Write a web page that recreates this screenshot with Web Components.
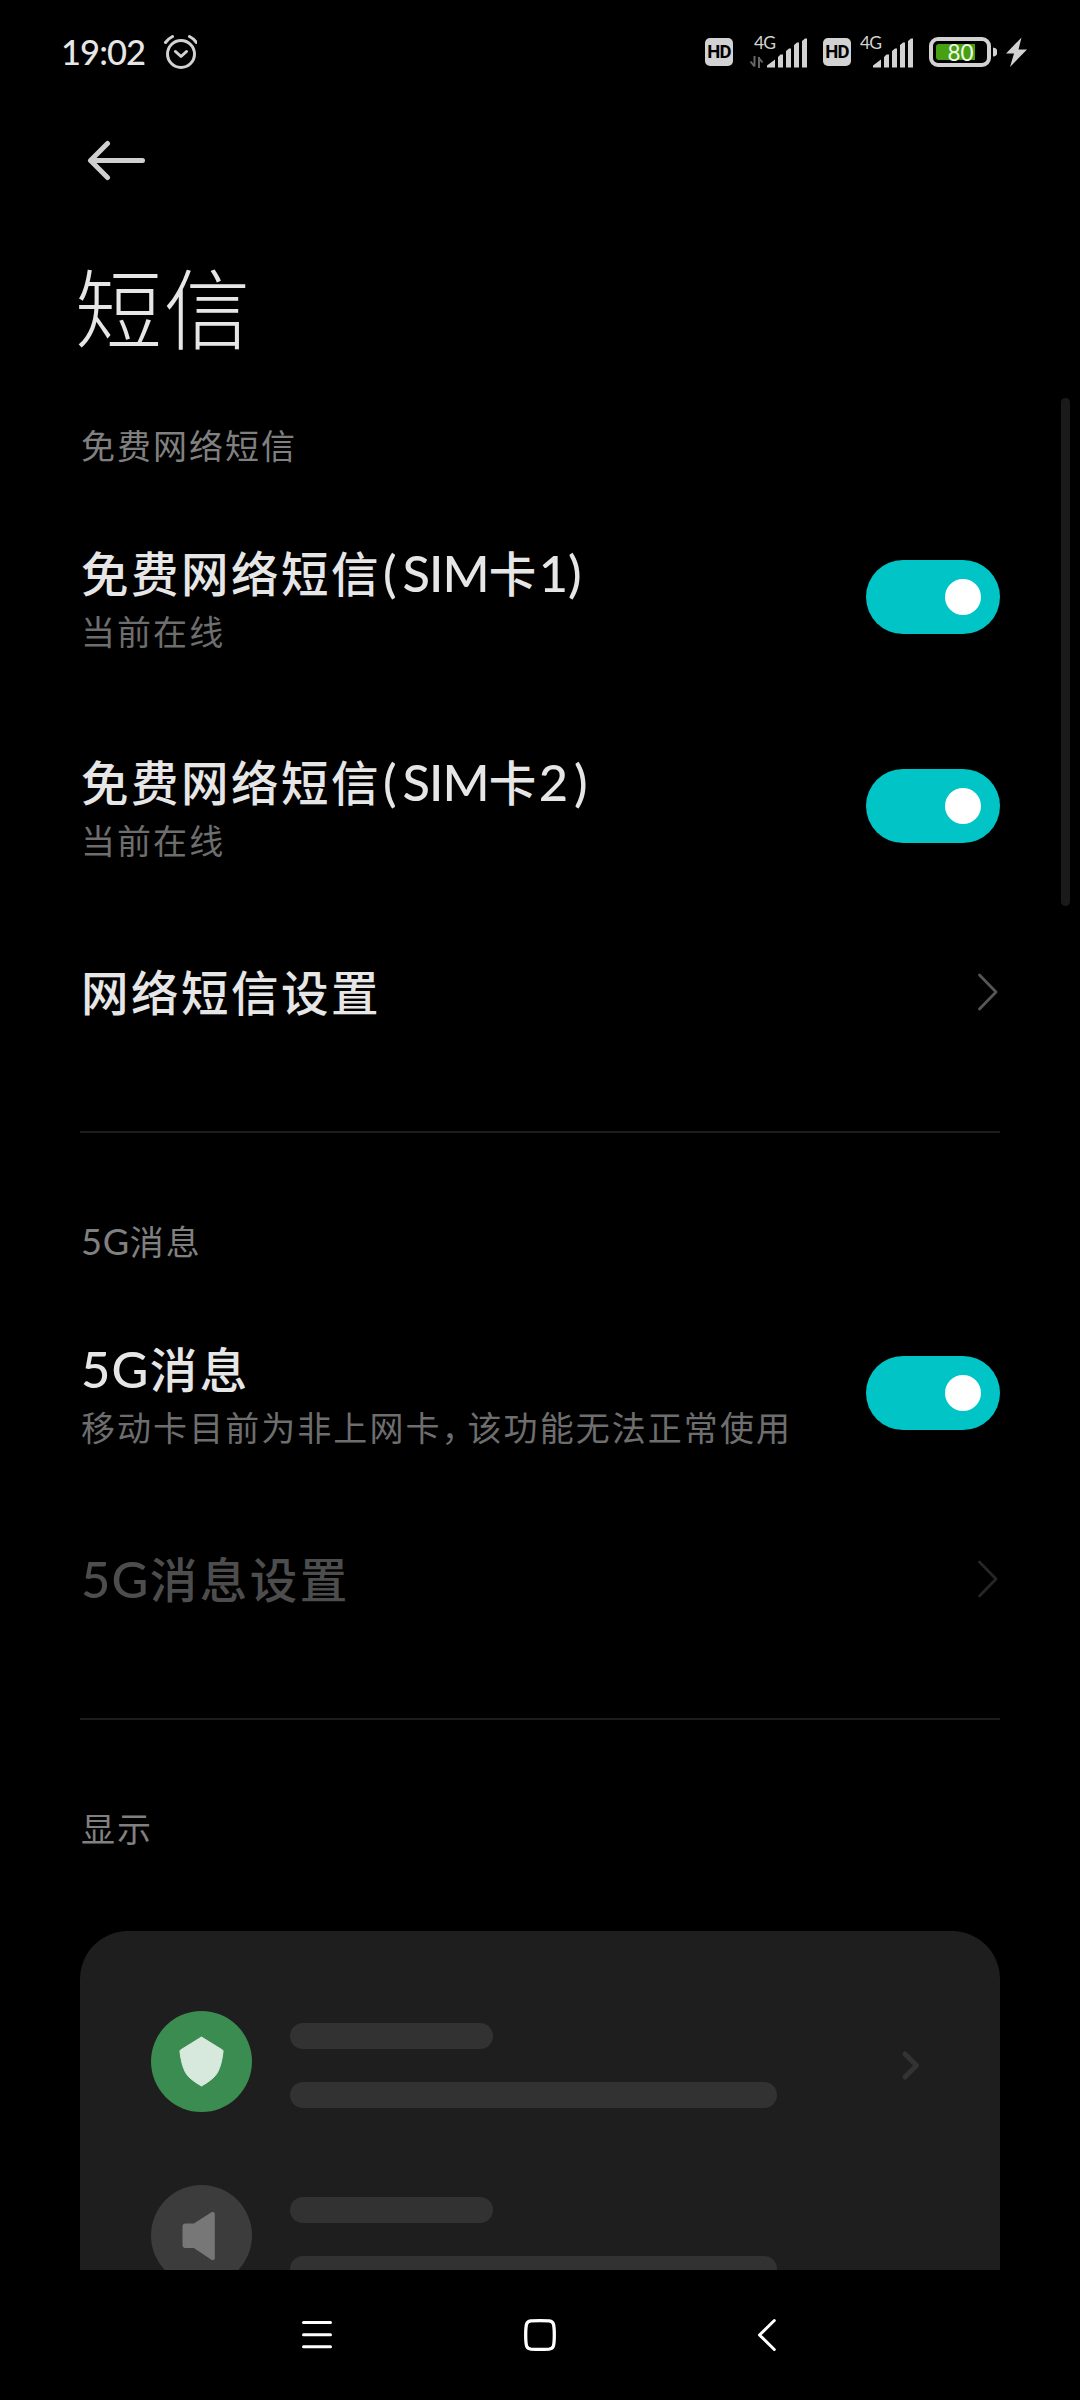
<!DOCTYPE html>
<html lang="zh-CN">
<head>
<meta charset="utf-8">
<title>短信</title>
<style>
html,body{margin:0;background:#000}
body{width:1080px;height:2400px;overflow:hidden;font-family:"Noto Sans CJK SC","Noto Sans",sans-serif;color:#e6e6e6}
</style>
</head>
<body>
<sms-settings></sms-settings>
<script>
function define(name, html){
  customElements.define(name, class extends HTMLElement{
    constructor(){
      super();
      this.attachShadow({mode:'open'}).innerHTML = html;
    }
  });
}

/* Latin run inside a Chinese label */
define('latin-run', `<style>:host{font-family:Lato,sans-serif;font-size:1.065em;line-height:0;letter-spacing:0}</style><slot></slot>`);

define('hd-badge', `<style>
:host{display:flex;width:28px;height:28px;border-radius:5px;background:#d2d2d2;align-items:center;justify-content:center;
font:700 18.500px/30px Roboto,sans-serif;letter-spacing:-.7px;color:#000}</style><span>HD</span>`);

define('signal-meter', `<style>
:host{display:block;width:57px;height:32px}
svg{display:block;overflow:visible}
text{font:400 17.5px Lato,sans-serif;fill:#d2d2d2}
:host(:not([data])) .d{display:none}</style>
<svg width="57" height="32" viewBox="0 0 57 32">
<text x="4" y="12.500" textLength="22">4G</text>
<g class="d" fill="none" stroke="#666" stroke-width="2"><path d="M4.5 20v10.5M4.5 30.500l-4-5"/><path d="M9 32V21M8.500 21.500l4 5"/></g>
<g fill="#d2d2d2"><path d="M17 31.500v-2l8-6v8zM28 31.500V21l2.500-2.500h2.500v13zM36 31.500V15l3-2.500h2v19zM44 31.500V9l3-2.500h2v25zM52 31.500V5l3-2.500h2v29z"/></g></svg>`);

define('battery-meter', `<style>
:host{display:block}svg{display:block}
text{font:400 23.500px Lato,sans-serif;fill:#f2fbea}</style>
<svg width="99" height="32" viewBox="0 0 99 32">
<rect x="2" y="3" width="58" height="26" rx="7" fill="none" stroke="#d2d2d2" stroke-width="4"/>
<path d="M10 8H46V24H10Q7 24 7 21V11Q7 8 10 8z" fill="#47a011"/>
<path d="M64 11.500q4 .5 4 3v3q0 2.500-4 3z" fill="#d2d2d2"/>
<text x="18.500" y="24.500" textLength="26" lengthAdjust="spacingAndGlyphs">80</text>
<path d="M92.500 1.500 77 17.500h8L81 31 98 13.500h-8.500z" fill="#d2d2d2"/></svg>`);

define('status-bar', `<style>
:host{display:flex;height:104px;box-sizing:border-box;padding:0 52px 0 61px;align-items:center}
.time{font:500 34.500px/40px Lato,sans-serif;letter-spacing:-.9px;width:100px;white-space:nowrap}
.r{margin-left:auto;display:flex;align-items:center}
</style>
<span class="time">19:02</span>
<svg width="36" height="36" viewBox="0 0 36 36" fill="none" stroke="#d2d2d2" stroke-width="3" stroke-linecap="round" stroke-linejoin="round"><circle cx="20" cy="20" r="13.500"/><path d="M14.500 17.500l5.500 5 5.500-5M4.500 8.500q3-4 7-6M35.500 8.500q-3-4-7-6"/></svg>
<div class="r">
<hd-badge></hd-badge><signal-meter data style="margin-left:17px"></signal-meter>
<hd-badge style="margin-left:16px"></hd-badge><signal-meter style="margin-left:5px"></signal-meter>
<battery-meter style="margin-left:16px"></battery-meter></div>`);

define('title-bar', `<style>
:host{display:flow-root;height:291px;padding-left:75px}
svg{display:block;margin:35px 0 0 12px}
h1{margin:62px 0 0;font-size:87px;font-weight:200;line-height:120px;letter-spacing:1.500px}</style>
<svg width="60" height="44" viewBox="0 0 60 44" fill="none" stroke="#d0d0d0" stroke-width="5" stroke-linecap="round" stroke-linejoin="round"><path d="M55.500 21.500H4M20.500 4.500 3.500 21.500l17 17"/></svg>
<h1><slot></slot></h1>`);

define('ui-switch', `<style>
:host{display:flex;box-sizing:border-box;width:134px;height:74px;border-radius:37px;background:#00c4c6;align-items:center;justify-content:flex-end;padding-right:19px;margin-top:1px}
i{width:36px;height:36px;border-radius:50%;background:#fff}</style><i></i>`);

define('ui-chevron', `<style>:host{display:block;color:#555}svg{display:block;margin:1px 1px 0 0}</style>
<svg width="22" height="40" viewBox="0 0 22 40" fill="none" stroke="currentColor" stroke-width="2.800" stroke-linecap="round" stroke-linejoin="round"><path d="M2.500 3 19 20 2.500 37"/></svg>`);

define('setting-row', `<style>
:host{display:flex;height:209px;align-items:center;justify-content:space-between}
:host([compact]){height:162px}
.t{font-size:47.500px;font-weight:500;line-height:66px;letter-spacing:2.500px;white-space:nowrap}
.s{font-size:34px;line-height:52px;letter-spacing:2.050px;color:#6e6e6e;white-space:nowrap}
:host(:not([compact])) .t{padding-top:3px}
:host([disabled]){color:#4d4d4d}
:host([disabled]) ::slotted(ui-chevron){color:#262626}
:host([compact]) .s{display:none}
</style><div><div class="t"><slot></slot></div><div class="s"><slot name="sub"></slot></div></div><slot name="end"></slot>`);

define('setting-group', `<style>
:host{display:block;padding:0 80px 59px 81px}
.h{box-sizing:border-box;height:97px;padding-top:1px;line-height:97px;font-size:34px;letter-spacing:2px;color:#808080}
:host([line])::before{content:"";display:block;height:2px;margin:0 0 58px -1px;background:#1c1c1c}
</style><div class="h"><slot name="title"></slot></div><slot></slot>`);

define('preview-item', `<style>
:host{display:flex;height:101px;margin-bottom:73px;align-items:flex-start}
.c{width:101px;height:101px;border-radius:50%;flex:none;background:var(--bg)}
.b{margin:12px 0 0 38px;flex:1}
.b i{display:block;height:26px;border-radius:13px;background:#323232;width:203px}
.b i+i{width:487px;margin-top:33px}
</style><div class="c"><slot></slot></div><div class="b"><i></i><i></i></div><slot name="end"></slot>`);

define('preview-card', `<style>
:host{display:block;box-sizing:border-box;height:339px;overflow:hidden;margin:56px 0 0 -1px;padding:80px 71px 0;background:#1e1e1e;border-radius:48px 48px 0 0}
svg{display:block}</style>
<preview-item style="--bg:#3a8c51">
<svg width="101" height="101" viewBox="0 0 101 101"><path d="M50.500 26 71.500 39Q72.300 39.500 72 41Q70.500 54 66.500 61.500Q63 68 50.500 75Q38 68 34.500 61.500Q30.500 54 29 41Q28.700 39.500 29.500 39z" fill="#d7e9dd" stroke="#d7e9dd" stroke-width="1" stroke-linejoin="round"/></svg>
<svg slot="end" style="margin:38px 7px 0 0" width="22" height="34" viewBox="0 0 22 34" fill="none" stroke="#333" stroke-width="5" stroke-linecap="round" stroke-linejoin="round"><path d="M5 5 16.500 16.500 5 28"/></svg>
</preview-item>
<preview-item style="--bg:#3c3c3c">
<svg width="101" height="101" viewBox="0 0 101 101"><path d="M34.500 39.500H43L61 28Q62.800 27.500 62.800 29.500V73Q62.800 74.500 61 74L43 62H34.500Q32.500 62 32.500 60V41.500Q32.500 39.500 34.500 39.500z" fill="#777" stroke="#777" stroke-width="2" stroke-linejoin="round"/></svg>
</preview-item>`);

define('nav-bar', `<style>
:host{display:flex;height:130px;align-items:center;justify-content:space-between;padding:0 300px}svg{display:block}</style>
<svg width="34" height="34" viewBox="0 0 34 34" stroke="#fff" stroke-width="3" stroke-linecap="round"><path d="M3.500 4.500h27M3.500 16.700h27M3.500 28.700h27"/></svg>
<svg width="34" height="34" viewBox="0 0 34 34" style="margin-left:-10px" fill="none" stroke="#fff" stroke-width="3.300"><path d="M2.700 17Q2.700 8 3.800 5.500Q5 3.200 8 2.900Q17 2.300 26 2.900Q29 3.200 30.200 5.500Q31.300 8 31.300 17Q31.300 26 30.200 28.500Q29 30.800 26 31.100Q17 31.700 8 31.100Q5 30.800 3.800 28.500Q2.700 26 2.700 17z"/></svg>
<svg width="24" height="34" viewBox="0 0 24 34" fill="none" stroke="#fff" stroke-width="3" stroke-linecap="round" stroke-linejoin="round"><path d="M18.300 2.500 3.500 17 18.300 31.500"/></svg>`);

define('sms-settings', `<style>
:host{display:block;width:1080px;height:2400px;position:relative;overflow:hidden;background:#000}
.bar{position:absolute;left:1061px;top:398px;width:9px;height:508px;border-radius:5px;background:#1a1a1a}
.comma{font-feature-settings:"halt";margin-right:7px}
.wide{letter-spacing:6px}
.g{letter-spacing:1.200px}
.gs{letter-spacing:.7px}
.sim{letter-spacing:-1px}
.paren{letter-spacing:6px;margin-left:2px}
setting-group:last-of-type{padding-bottom:0}
</style>
<status-bar></status-bar>
<title-bar>短信</title-bar>
<setting-group>
<span slot="title">免费网络短信</span>
<setting-row>免费网络短信<latin-run class="sim"><span class="paren">(</span>SIM</latin-run>卡<latin-run>1)</latin-run><span slot="sub">当前在线</span><ui-switch slot="end"></ui-switch></setting-row>
<setting-row>免费网络短信<latin-run class="sim"><span class="paren">(</span>SIM</latin-run>卡<latin-run><span class="wide">2</span>)</latin-run><span slot="sub">当前在线</span><ui-switch slot="end"></ui-switch></setting-row>
<setting-row compact>网络短信设置<ui-chevron slot="end"></ui-chevron></setting-row>
</setting-group>
<setting-group line>
<span slot="title"><latin-run class="gs">5G</latin-run>消息</span>
<setting-row><latin-run class="g">5G</latin-run>消息<span slot="sub">移动卡目前为非上网卡<span class="comma">，</span>该功能无法正常使用</span><ui-switch slot="end"></ui-switch></setting-row>
<setting-row compact disabled><latin-run class="g">5G</latin-run>消息设置<ui-chevron slot="end"></ui-chevron></setting-row>
</setting-group>
<setting-group line>
<span slot="title">显示</span>
<preview-card></preview-card>
</setting-group>
<nav-bar></nav-bar>
<div class="bar"></div>`);
</script>
</body>
</html>
